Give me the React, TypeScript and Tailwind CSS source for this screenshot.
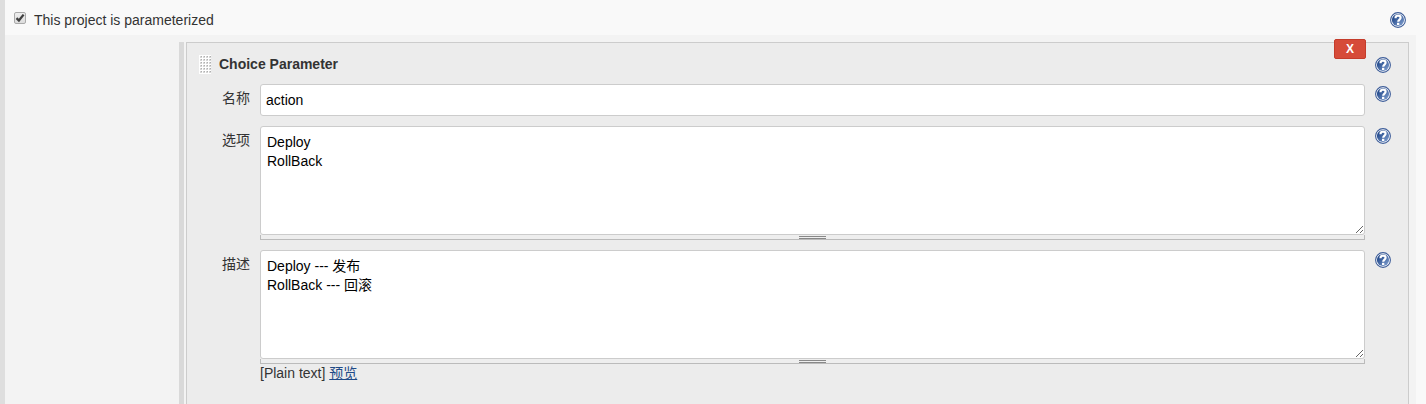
import { useId, useState, type ReactNode } from "react";

function HelpButton({ label }: { label: string }) {
  const id = useId();
  return (
    <button type="button" aria-label={label} className="block size-4 shrink-0 cursor-pointer">
      <svg viewBox="0 0 16 16" className="size-4" aria-hidden="true">
        <defs>
          <linearGradient id={id} x1="0" y1="0" x2="1" y2="1">
            <stop offset="0.2" stopColor="#234a8c" />
            <stop offset="1" stopColor="#87a5d3" />
          </linearGradient>
        </defs>
        <circle cx="8" cy="8" r="7.4" fill="#fff" stroke="#3c5c98" strokeWidth="1.1" />
        <circle cx="8" cy="8" r="6.1" fill={`url(#${id})`} />
        <path
          d="M5.5 6.2C5.5 4.4 6.6 3.7 8 3.7c1.5 0 2.6.8 2.6 2.1C10.6 7.6 8.2 7.6 8.2 9.8"
          fill="none"
          stroke="#fff"
          strokeWidth="2.2"
        />
        <rect x="7" y="10.8" width="2.3" height="2.2" fill="#fff" />
      </svg>
    </button>
  );
}

function DragHandle() {
  const id = useId();
  return (
    <svg width="12" height="19" className="shrink-0 cursor-move" aria-hidden="true">
      <defs>
        <pattern id={id} width="3" height="3" patternUnits="userSpaceOnUse">
          <rect width="3" height="3" fill="#fff" />
          <rect x="1" y="1" width="2" height="2" fill="#d6d6d6" />
          <rect x="2" y="1" width="1" height="1" fill="#b0b0b0" />
        </pattern>
      </defs>
      <rect width="12" height="19" fill={`url(#${id})`} />
    </svg>
  );
}

function Row({ id, label, children }: { id: string; label: string; children: ReactNode }) {
  return (
    <div className="flex items-start">
      <label htmlFor={id} className="w-16 shrink-0 pt-1 pr-[10px] text-right">
        {label}
      </label>
      <div className="min-w-0 flex-1">{children}</div>
      <div className="ml-[10px] pt-0.5">
        <HelpButton label={`Help: ${label}`} />
      </div>
    </div>
  );
}

function TextArea({ id, value }: { id: string; value: string }) {
  return (
    <>
      <textarea
        id={id}
        defaultValue={value}
        className="block h-[109px] w-full resize rounded-[3px] border border-[#cccccc] bg-white px-1.5 py-1.5 leading-[19px] text-black outline-none"
      />
      <div className="flex h-[5px] cursor-s-resize items-end justify-center border-x border-b border-[#bbbbbb] bg-[#eeeeee]">
        <span className="h-[3px] w-[27px] border-y border-[#888888]" />
      </div>
    </>
  );
}

export default function App() {
  const [enabled, setEnabled] = useState(true);
  return (
    <main className="flex min-h-screen flex-col border-l-[5px] border-[#dedede] bg-[#f9f9f9] font-['Liberation_Sans','Noto_Sans_CJK_SC',sans-serif] text-sm text-[#333333]">
      <div className="flex h-[35px] items-center justify-between pt-1 pr-5 pl-[9px]">
        <label className="flex items-center gap-2">
          <span className="relative -mt-1 size-3">
            <input
              type="checkbox"
              checked={enabled}
              onChange={(e) => setEnabled(e.target.checked)}
              className="peer block size-3 appearance-none rounded-xs border border-[#aaaaaa] bg-linear-to-b from-[#eeeeee] to-[#dddddd]"
            />
            <svg
              viewBox="0 0 12 12"
              className="pointer-events-none absolute inset-0 hidden size-3 peer-checked:block"
              aria-hidden="true"
            >
              <path d="M2.5 6.2 4.9 8.5 9.6 2.6" fill="none" stroke="#404040" strokeWidth="2.3" />
            </svg>
          </span>
          This project is parameterized
        </label>
        <HelpButton label="Help: This project is parameterized" />
      </div>

      <div className="mr-[10px] flex flex-1 bg-[#f3f3f3] pt-[7px] pr-[7px]">
        <div className="w-[174px] shrink-0" />
        <div className="mr-0.5 w-[5px] shrink-0 bg-[#d9d9d9]" />
        <section className="relative min-w-0 flex-1 border-x border-t border-[#cccccc] bg-[#ececec] pr-[17px] pb-5 pl-[9px]">
          <button
            type="button"
            aria-label="Delete parameter"
            className="absolute -top-1 right-[42px] h-5 w-8 cursor-pointer rounded-xs border border-[#c43c2b] bg-[#d64b39] text-xs leading-[18px] font-bold text-white"
          >
            X
          </button>
          <header className="flex h-[41px] items-center pt-0.5 pl-[3px]">
            <DragHandle />
            <h2 className="ml-2 flex-1 pb-0.5 font-bold">Choice Parameter</h2>
            <HelpButton label="Help: Choice Parameter" />
          </header>
          <div className="flex flex-col gap-[10px]">
            <Row id="name" label="名称">
              <input
                id="name"
                type="text"
                defaultValue="action"
                className="block h-8 w-full rounded-[3px] border border-[#cccccc] bg-white px-[5px] text-black outline-none"
              />
            </Row>
            <Row id="choices" label="选项">
              <TextArea id="choices" value={"Deploy\nRollBack"} />
            </Row>
            <Row id="description" label="描述">
              <TextArea id="description" value={"Deploy --- 发布\nRollBack --- 回滚"} />
              <p className="leading-[18px]">
                [Plain text]{" "}
                <a href="#preview" className="text-[#204a87] underline">
                  预览
                </a>
              </p>
            </Row>
          </div>
        </section>
      </div>
    </main>
  );
}
